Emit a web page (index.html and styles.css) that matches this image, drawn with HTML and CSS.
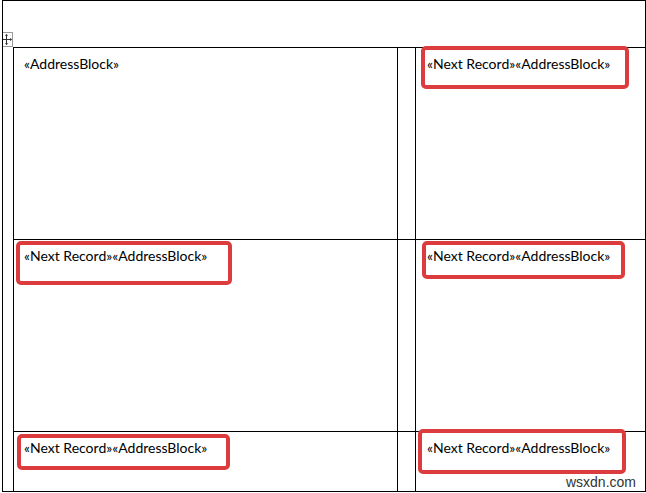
FILE: index.html
```html
<!DOCTYPE html>
<html>
<head>
<meta charset="utf-8">
<link rel="stylesheet" href="styles.css">
</head>
<body>
<div class="page">
  <div class="header"></div>
  <div class="handle">
    <svg width="11" height="11" viewBox="0 0 11 11">
      <path d="M5.5 0.5V10.5M0.5 5.5H10.5" stroke="#333" stroke-width="1" fill="none"/>
      <path d="M5.5 0L3.8 1.8H7.2Z M5.5 11L3.8 9.2H7.2Z M0 5.5L1.8 3.8V7.2Z M11 5.5L9.2 3.8V7.2Z" fill="#333"/>
    </svg>
  </div>
  <div class="labels">
    <div class="cell"><span class="text">«AddressBlock»</span></div>
    <div class="cell gap"></div>
    <div class="cell last"><span class="text r">«Next Record»«AddressBlock»</span><span class="mark m1"></span></div>

    <div class="cell"><span class="text">«Next Record»«AddressBlock»</span><span class="mark m2"></span></div>
    <div class="cell gap"></div>
    <div class="cell last"><span class="text r">«Next Record»«AddressBlock»</span><span class="mark m3"></span></div>

    <div class="cell"><span class="text">«Next Record»«AddressBlock»</span><span class="mark m4"></span></div>
    <div class="cell gap"></div>
    <div class="cell last"><span class="text r">«Next Record»«AddressBlock»</span><span class="mark m5"></span></div>
  </div>
  <div class="watermark">wsxdn.com</div>
</div>
</body>
</html>
```

FILE: styles.css
```css
html, body {
  margin: 0;
  padding: 0;
  background: #fff;
}
body {
  width: 646px;
  height: 493px;
  overflow: hidden;
  font-family: Lato, "Open Sans", sans-serif;
  font-size: 14px;
  color: #000;
}
.page {
  position: relative;
  margin-left: 2px;
  width: 644px;
  height: 492px;
  box-sizing: border-box;
  border: 1px solid #000;
  overflow: hidden;
}
.header {
  height: 46px;
}
.handle {
  position: absolute;
  left: -3px;
  top: 31px;
  width: 11px;
  height: 13px;
  border: 1px solid #9a9a9a;
  background: #fff;
  display: flex;
  align-items: center;
  justify-content: center;
}
.labels {
  margin-left: 10px;
  display: grid;
  grid-template-columns: 384px 18px 1fr;
  grid-auto-rows: 192px;
  border-left: 1px solid #000;
  border-top: 1px solid #000;
}
.cell {
  position: relative;
  box-sizing: border-box;
  border-right: 1px solid #000;
  border-bottom: 1px solid #000;
  padding: 7px 0 0 10px;
  line-height: 18px;
}
.cell.gap {
  padding: 0;
}
.cell.last {
  border-right: none;
  padding-left: 11px;
}
.text {
  white-space: nowrap;
}
.mark {
  position: absolute;
  box-sizing: border-box;
  border: 4px solid #dd3c3f;
  border-radius: 5px;
}
.m1 { left: 5px; top: -2px; width: 208px; height: 43px; }
.m2 { left: 2px; top: 1px; width: 216px; height: 44px; }
.m3 { left: 6px; top: 1px; width: 203px; height: 38px; }
.m4 { left: 3px; top: 2px; width: 213px; height: 36px; }
.m5 { left: 2px; top: -3px; width: 208px; height: 45px; }
.watermark {
  position: absolute;
  right: 9px;
  bottom: 1px;
  font-family: "Liberation Sans", Arial, sans-serif;
  font-size: 14px;
  color: #333;
}
```
